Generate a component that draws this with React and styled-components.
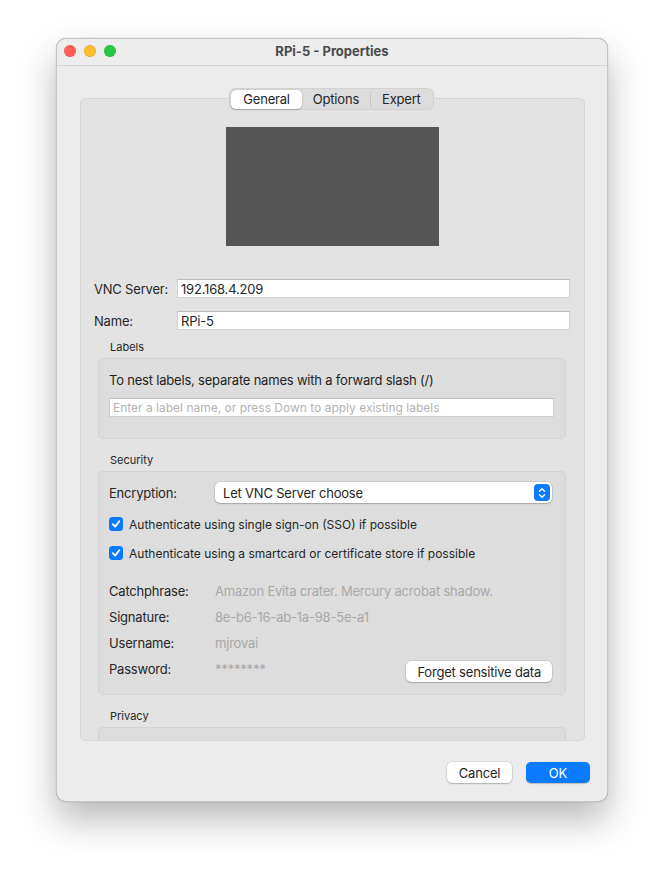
import React from 'react'
import styled, { createGlobalStyle } from 'styled-components'

const GlobalStyle = createGlobalStyle`
  html, body {
    margin: 0;
    padding: 0;
    background: #ffffff;
    font-family: Inter, "Liberation Sans", Arial, sans-serif;
    font-size: 13px;
    letter-spacing: -0.2px;
    color: #262626;
  }
`

const Page = styled.div`
  padding: 38px 0 0 56px;
  min-height: 876px;
  box-sizing: border-box;
`

const Window = styled.div`
  width: 552px;
  height: 764px;
  box-sizing: border-box;
  border-radius: 10px;
  background: #ececec;
  border: 1px solid #c4c4c4;
  box-shadow: 0 18px 36px rgba(0, 0, 0, 0.28), 0 0 1px rgba(0, 0, 0, 0.4);
  display: flex;
  flex-direction: column;
  overflow: hidden;
`

const TitleBar = styled.div`
  height: 27px;
  flex: none;
  display: grid;
  grid-template-columns: 1fr auto 1fr;
  align-items: center;
  padding-bottom: 3px;
  background: #ededed;
  border-bottom: 1px solid #d4d4d4;
  box-sizing: border-box;
`

const Lights = styled.div`
  display: flex;
  gap: 8px;
  padding-left: 7px;
`

const Light = styled.span`
  width: 12px;
  height: 12px;
  border-radius: 50%;
  background: ${p => p.color};
  box-shadow: inset 0 0 0 0.5px rgba(0, 0, 0, 0.12);
`

const Title = styled.div`
  font-weight: 700;
  font-size: 13px;
  letter-spacing: 0;
  color: #4a4a4a;
`

const Body = styled.div`
  flex: 1;
  display: flex;
  flex-direction: column;
  padding: 22px 17px 0 23px;
`

const TabsRow = styled.div`
  display: flex;
  justify-content: center;
  margin: 0 7px -12px 0;
  position: relative;
  z-index: 2;
`

const Segmented = styled.div`
  display: flex;
  align-items: center;
  height: 22px;
  box-sizing: border-box;
  padding: 1px;
  border-radius: 6px;
  background: #dcdcdc;
  border: 1px solid #d2d2d2;
`

const Segment = styled.div`
  height: 19px;
  box-sizing: border-box;
  padding: 0 ${p => p.pad}px;
  display: flex;
  align-items: center;
  border-radius: 5px;
  color: #262626;
  background: ${p => (p.active ? '#ffffff' : 'transparent')};
  box-shadow: ${p => (p.active ? '0 0.5px 1.5px rgba(0,0,0,0.25)' : 'none')};
  border-left: ${p => (p.divider ? '1px solid #c4c4c4' : 'none')};
`

const TabBox = styled.div`
  height: 643px;
  flex: none;
  margin-right: 5px;
  box-sizing: border-box;
  background: #e3e3e3;
  border: 1px solid #d6d6d6;
  border-radius: 5px;
  overflow: hidden;
  padding: 28px 14px 0 13px;
  display: flex;
  flex-direction: column;
  & > * {
    flex: none;
  }
`

const Preview = styled.div`
  align-self: center;
  width: 213px;
  height: 119px;
  background: #555555;
`

const FormRow = styled.div`
  display: grid;
  grid-template-columns: 83px 1fr;
  align-items: center;
  margin-top: ${p => p.top}px;
`

const TextInput = styled.div`
  height: 19px;
  box-sizing: border-box;
  background: #ffffff;
  border: 1px solid #cfcfcf;
  border-top-color: #bdbdbd;
  padding: 0 3px;
  display: flex;
  align-items: center;
  color: ${p => (p.placeholder ? '#b3b3b3' : '#262626')};
  font-size: ${p => (p.placeholder ? '12px' : '13px')};
  letter-spacing: ${p => (p.placeholder ? '0' : '-0.2px')};
`

const GroupTitle = styled.div`
  font-size: 11px;
  letter-spacing: 0;
  line-height: 13px;
  color: #262626;
  margin: ${p => p.top}px 0 4px 16px;
`

const Group = styled.div`
  margin: 0 4px;
  background: #dddddd;
  border: 1px solid #d3d3d3;
  border-radius: 5px;
  padding: ${p => p.pad};
  height: ${p => (p.h ? `${p.h}px` : 'auto')};
  display: flex;
  flex-direction: column;
`

const Hint = styled.div`
  color: #1f1f1f;
  line-height: 16px;
  margin-bottom: 10px;
`

const SecRow = styled.div`
  display: grid;
  grid-template-columns: 106px 1fr;
  align-items: center;
  height: ${p => p.h}px;
`

const Select = styled.div`
  height: 21px;
  box-sizing: border-box;
  background: #ffffff;
  border-radius: 5px;
  box-shadow: 0 0 0 0.5px rgba(0, 0, 0, 0.15), 0 1px 1.5px rgba(0, 0, 0, 0.2);
  display: flex;
  align-items: center;
  justify-content: space-between;
  padding: 0 2px 0 8px;
`

const Stepper = styled.span`
  width: 16px;
  height: 17px;
  border-radius: 4px;
  background: #0a7aff;
  display: flex;
  align-items: center;
  justify-content: center;
`

const CheckRow = styled.label`
  display: flex;
  align-items: center;
  gap: 6px;
  height: 16px;
  margin-top: 13px;
  font-size: 12px;
  letter-spacing: 0;
`

const Box = styled.span`
  width: 14px;
  height: 14px;
  border-radius: 3.5px;
  background: #0a7aff;
  display: flex;
  align-items: center;
  justify-content: center;
  flex: none;
`

const Spacer = styled.div`
  height: ${p => p.h}px;
`

const Value = styled.span`
  color: #a8a8a8;
`

const PushButton = styled.button`
  font-family: inherit;
  font-size: 13px;
  letter-spacing: -0.2px;
  height: 21px;
  border: none;
  border-radius: 5px;
  padding: 0 ${p => p.pad || 0}px;
  min-width: ${p => p.w || 0}px;
  background: ${p => (p.primary ? '#0a7aff' : '#ffffff')};
  color: ${p => (p.primary ? '#ffffff' : '#262626')};
  box-shadow: ${p =>
    p.primary
      ? '0 0.5px 1px rgba(0,0,0,0.2)'
      : '0 0 0 0.5px rgba(0,0,0,0.15), 0 1px 1.5px rgba(0,0,0,0.2)'};
`

const PasswordRow = styled.div`
  display: grid;
  grid-template-columns: 106px 1fr auto;
  align-items: center;
  height: 26px;
  & > button {
    align-self: end;
  }
`

const Footer = styled.div`
  display: flex;
  justify-content: flex-end;
  gap: 14px;
  padding-top: 21px;
`

const Check = () => (
  <svg width='10' height='10' viewBox='0 0 10 10'>
    <path d='M1.8 5.2 L4.1 7.6 L8.3 2.2' fill='none' stroke='#fff' strokeWidth='1.8' strokeLinecap='round' strokeLinejoin='round' />
  </svg>
)

const Chevrons = () => (
  <svg width='8' height='12' viewBox='0 0 8 12'>
    <path d='M1.5 4.3 L4 1.8 L6.5 4.3 M1.5 7.7 L4 10.2 L6.5 7.7' fill='none' stroke='#fff' strokeWidth='1.4' strokeLinecap='round' strokeLinejoin='round' />
  </svg>
)

const DETAILS = [
  { label: 'Catchphrase:', value: 'Amazon Evita crater. Mercury acrobat shadow.' },
  { label: 'Signature:', value: '8e-b6-16-ab-1a-98-5e-a1' },
  { label: 'Username:', value: 'mjrovai' }
]

const App = () => {
  return (
    <Page>
      <GlobalStyle />
      <Window>
        <TitleBar>
          <Lights>
            <Light color='#ff5f57' />
            <Light color='#febc2e' />
            <Light color='#28c840' />
          </Lights>
          <Title>RPi-5 - Properties</Title>
          <div />
        </TitleBar>

        <Body>
          <TabsRow>
            <Segmented>
              <Segment active pad={12}>General</Segment>
              <Segment pad={11}>Options</Segment>
              <Segment divider pad={11}>Expert</Segment>
            </Segmented>
          </TabsRow>

          <TabBox>
            <Preview />

            <FormRow top={33}>
              <span>VNC Server:</span>
              <TextInput>192.168.4.209</TextInput>
            </FormRow>
            <FormRow top={13}>
              <span>Name:</span>
              <TextInput>RPi-5</TextInput>
            </FormRow>

            <GroupTitle top={11}>Labels</GroupTitle>
            <Group pad='13px 11px 21px 10px'>
              <Hint>To nest labels, separate names with a forward slash (/)</Hint>
              <TextInput placeholder>Enter a label name, or press Down to apply existing labels</TextInput>
            </Group>

            <GroupTitle top={15}>Security</GroupTitle>
            <Group pad='10px 13px 12px 10px'>
              <SecRow h={21}>
                <span>Encryption:</span>
                <Select>
                  <span>Let VNC Server choose</span>
                  <Stepper><Chevrons /></Stepper>
                </Select>
              </SecRow>
              <CheckRow>
                <Box><Check /></Box>
                <span>Authenticate using single sign-on (SSO) if possible</span>
              </CheckRow>
              <CheckRow>
                <Box><Check /></Box>
                <span>Authenticate using a smartcard or certificate store if possible</span>
              </CheckRow>
              <Spacer h={17} />
              {DETAILS.map(d => (
                <SecRow key={d.label} h={26}>
                  <span>{d.label}</span>
                  <Value>{d.value}</Value>
                </SecRow>
              ))}
              <PasswordRow>
                <span>Password:</span>
                <Value>********</Value>
                <PushButton pad={11}>Forget sensitive data</PushButton>
              </PasswordRow>
            </Group>

            <GroupTitle top={15}>Privacy</GroupTitle>
            <Group pad='0' h={120} />
          </TabBox>

          <Footer>
            <PushButton w={65}>Cancel</PushButton>
            <PushButton primary w={64}>OK</PushButton>
          </Footer>
        </Body>
      </Window>
    </Page>
  )
}

export default App
